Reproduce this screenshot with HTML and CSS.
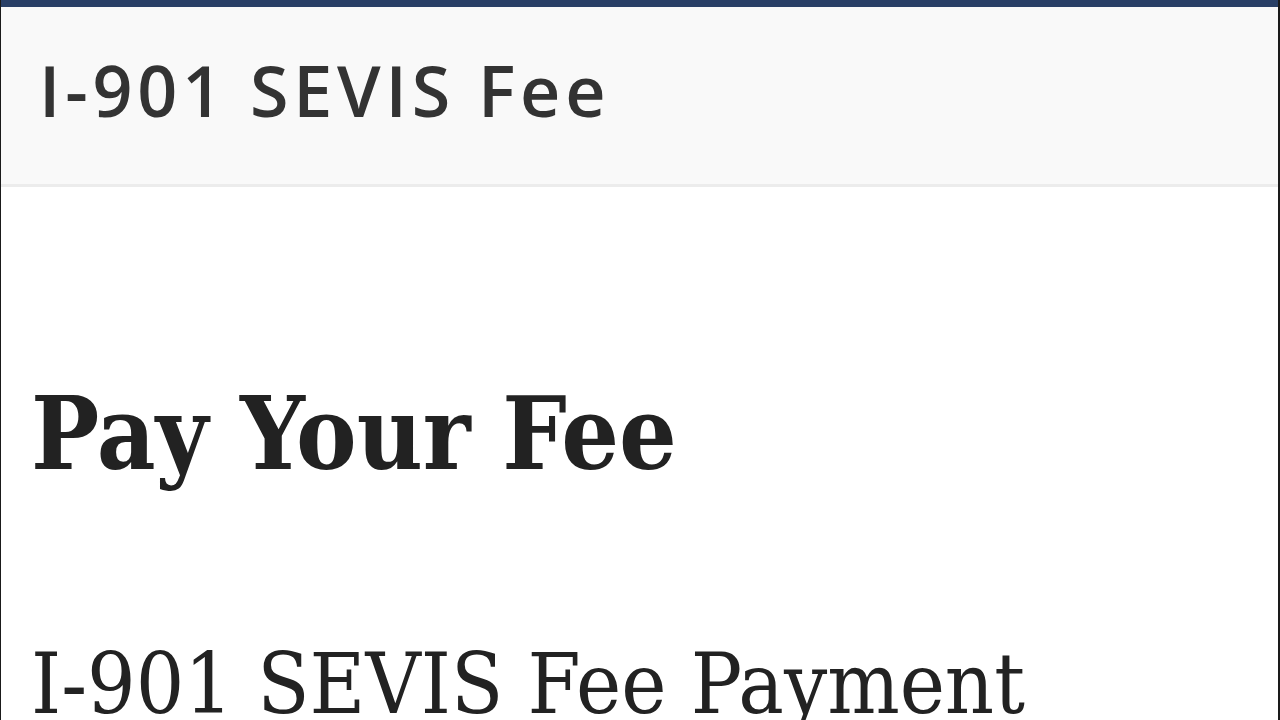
FILE: index.html
```html
<!DOCTYPE html>
<html lang="en">
<head>
    <meta charset="UTF-8">
    <meta name="viewport" content="width=device-width, initial-scale=1.0">
    <title>I-901 SEVIS Fee</title>
    <link rel="stylesheet" href="styles.css">
</head>
<body>

<div class="page">
    <div class="top-bar"></div>

    <header class="site-header">
        <div class="site-title">I-901 SEVIS Fee</div>
    </header>

    <main class="content">
        <h1 class="page-title">Pay Your Fee</h1>
        <h2 class="section-title">I-901 SEVIS Fee Payment</h2>
    </main>
</div>

</body>
</html>
```

FILE: styles.css
```css
body {
    margin: 0;
    padding: 0;
    background-color: #fff;
    color: #222;
    overflow: hidden;
}

.page {
    height: 720px;
    border-left: 1px solid #1a1a1a;
    border-right: 2px solid #1a1a1a;
    overflow: hidden;
}

.top-bar {
    height: 7px;
    background-color: #293f66;
}

.site-header {
    height: 177px;
    background-color: #f9f9f9;
    border-bottom: 3px solid #ececec;
    display: flex;
    align-items: center;
    padding-left: 38px;
}

.site-title {
    font-family: "Open Sans", sans-serif;
    font-weight: 600;
    font-size: 70px;
    letter-spacing: 4.8px;
    color: #333;
    padding-bottom: 12px;
}

.content {
    padding: 0 30px;
}

.page-title {
    font-family: "DejaVu Serif", serif;
    font-stretch: condensed;
    font-weight: bold;
    font-size: 101px;
    margin: 196px 0 0;
    line-height: 1;
    color: #222;
}

.section-title {
    font-family: "DejaVu Serif", serif;
    font-stretch: condensed;
    font-weight: normal;
    font-size: 85px;
    margin: 157px 0 0;
    line-height: 1;
    color: #222;
}
```
